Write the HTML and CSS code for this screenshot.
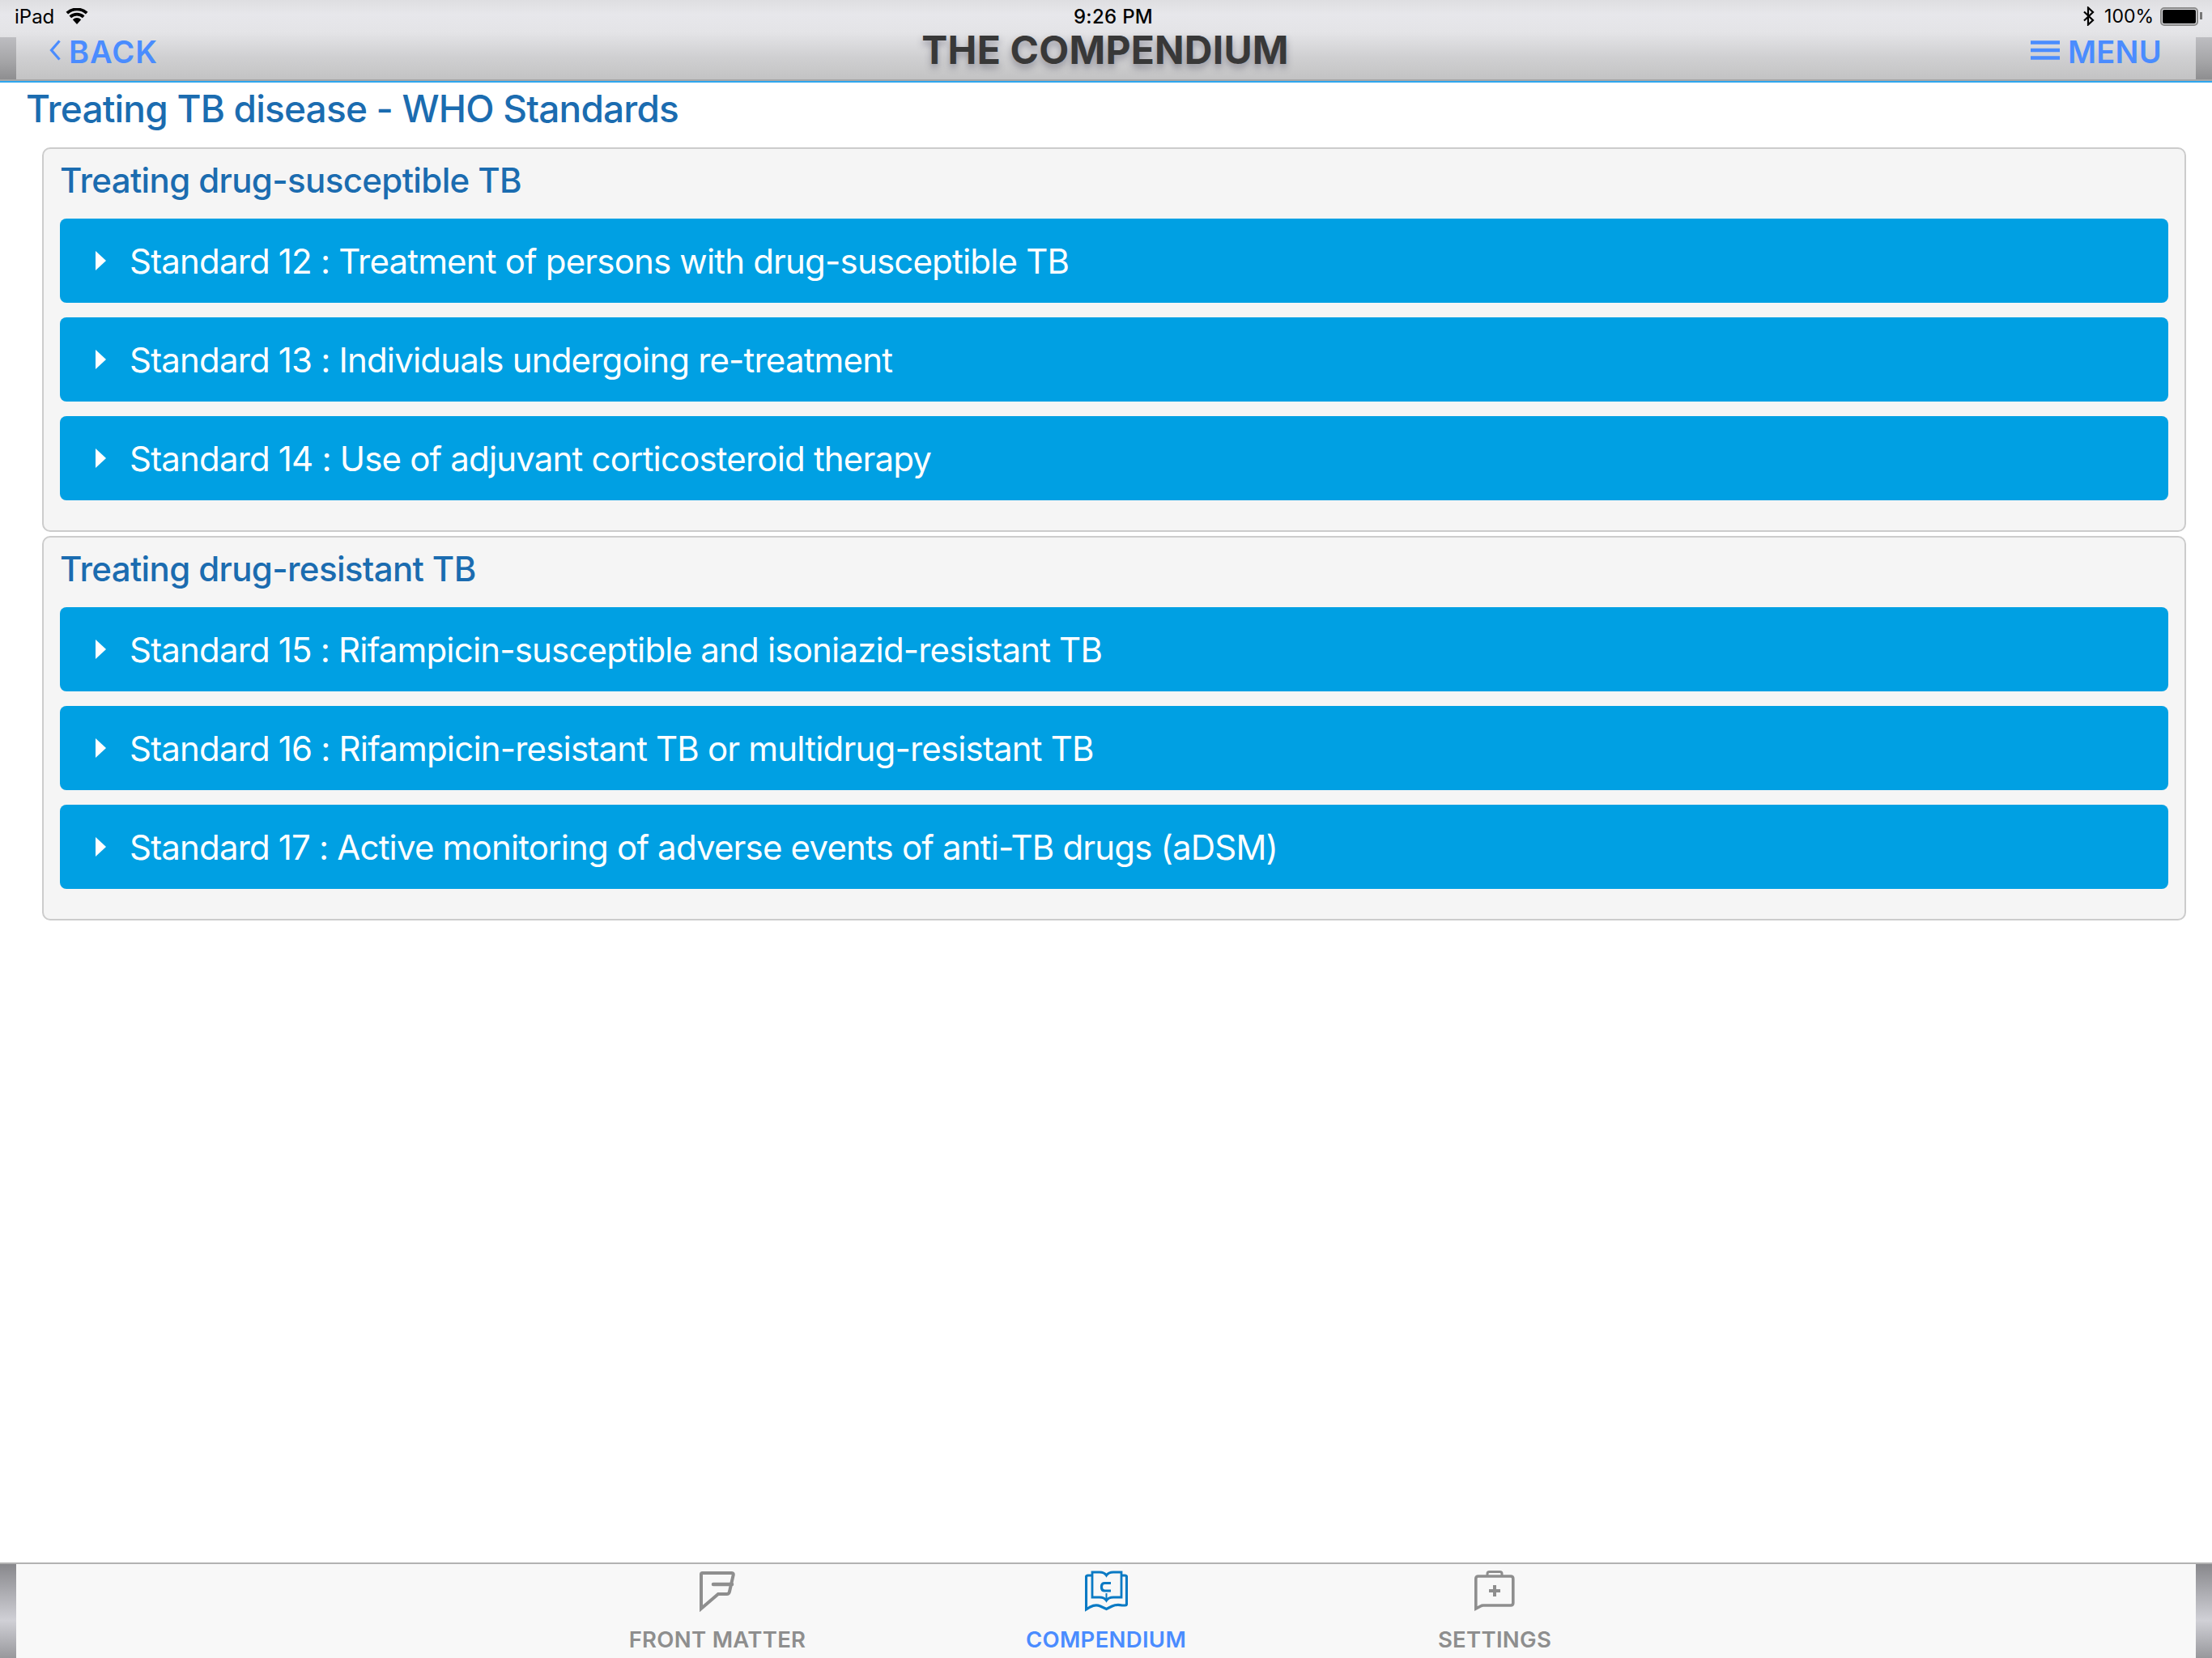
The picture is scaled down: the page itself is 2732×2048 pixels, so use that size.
FILE: index.html
```html
<!DOCTYPE html>
<html lang="en">
<head>
  <meta charset="UTF-8" />
  <title>The Compendium</title>
  <link rel="stylesheet" href="styles.css">
</head>
<body>
  <header class="topbar">
    <div class="status">
      <div class="status-left">
        <span>iPad</span>
        <svg class="wifi" width="28" height="20" viewBox="0 0 28 20"><path d="M14 20 8.800 14.200a7.400 7.400 0 0 1 10.400 0z" fill="#000"/><path d="M5.800 10.800a12 12 0 0 1 16.400 0M1.800 6.200a18 18 0 0 1 24.400 0" fill="none" stroke="#000" stroke-width="3.800"/></svg>
      </div>
      <div class="status-time">9:26 PM</div>
      <div class="status-right">
        <svg class="bt" width="16" height="24" viewBox="0 0 16 24"><path d="M2 6.500 13 17l-6 5.500V1.500L13 7 2 17.500" fill="none" stroke="#000" stroke-width="2.200"/></svg>
        <span>100%</span>
        <div class="battery"><div class="battery-fill"></div></div>
      </div>
    </div>
    <nav class="navrow">
      <a class="nav-link nav-back">
        <svg width="16" height="26" viewBox="0 0 16 26"><path d="M13.500 1.500 3.500 13l10 11.500" fill="none" stroke="#4a8cff" stroke-width="3.200"/></svg>
        BACK
      </a>
      <div class="app-title">THE COMPENDIUM</div>
      <a class="nav-link nav-menu">
        <svg width="36" height="24" viewBox="0 0 36 24"><path d="M0 2.500h36M0 12h36M0 21.500h36" stroke="#4a8cff" stroke-width="4.600"/></svg>
        MENU
      </a>
    </nav>
  </header>

  <main class="content">
    <h1 class="page-title">Treating TB disease - WHO Standards</h1>

    <section class="panel">
      <h2 class="panel-title">Treating drug-susceptible TB</h2>
      <div class="row"><span class="caret"></span>Standard 12 : Treatment of persons with drug-susceptible TB</div>
      <div class="row"><span class="caret"></span>Standard 13 : Individuals undergoing re-treatment</div>
      <div class="row"><span class="caret"></span>Standard 14 : Use of adjuvant corticosteroid therapy</div>
    </section>

    <section class="panel">
      <h2 class="panel-title">Treating drug-resistant TB</h2>
      <div class="row"><span class="caret"></span>Standard 15 : Rifampicin-susceptible and isoniazid-resistant TB</div>
      <div class="row"><span class="caret"></span>Standard 16 : Rifampicin-resistant TB or multidrug-resistant TB</div>
      <div class="row"><span class="caret"></span>Standard 17 : Active monitoring of adverse events of anti-TB drugs (aDSM)</div>
    </section>
  </main>

  <footer class="tabbar">
    <div class="tab-list">
      <div class="tab">
        <svg width="46" height="51" viewBox="0 0 46 51"><path d="M3 47V4.500Q3 3 4.500 3H41q2 0 1.700 2.500L38 26q-.5 3-3.500 3H24z" fill="none" stroke="#8e8e8e" stroke-width="4"/><path d="M18 17h23" stroke="#8e8e8e" stroke-width="4.500" stroke-linecap="round"/></svg>
        <span>FRONT MATTER</span>
      </div>
      <div class="tab tab-active">
        <svg width="53" height="51" viewBox="0 0 53 51"><path d="M8 6H3.500Q1.500 6 1.500 8V48L6.500 45Q13 41.500 19 44L26.500 47.500 33.500 44Q39 41.500 46 43H49.500Q51.500 43 51.500 41V8Q51.500 6 49.500 6H45" fill="none" stroke="#0a7ac4" stroke-width="3.200"/><path d="M9 2H18Q24 2 26.500 6 29 2 35 2H45V33H35Q29 33 26.500 37 24 33 18 33H9Z" fill="none" stroke="#0a7ac4" stroke-width="2.800"/><path d="M32 15.500H24.500Q20.500 15.500 20.500 19.500V21Q20.500 25 24.500 25H32" fill="none" stroke="#0a7ac4" stroke-width="3.200"/><path d="M26.500 28V36" stroke="#0a7ac4" stroke-width="2"/></svg>
        <span>COMPENDIUM</span>
      </div>
      <div class="tab">
        <svg width="50" height="51" viewBox="0 0 50 51"><path d="M1.800 47V10q0-3 3-3h40q3 0 3 3v30q0 3-3 3H11q-2 0-3 .8z" fill="none" stroke="#8e8e8e" stroke-width="3.600"/><path d="M16 7V4q0-2.500 2.500-2.500h13Q34 1.500 34 4v3" fill="none" stroke="#8e8e8e" stroke-width="3"/><path d="M25 18v14M18 25h14" stroke="#8e8e8e" stroke-width="4"/></svg>
        <span>SETTINGS</span>
      </div>
    </div>
  </footer>
</body>
</html>
```

FILE: styles.css
```css
* {
  box-sizing: border-box;
}
html, body {
  height: 100%;
}
body {
  margin: 0;
  display: flex;
  flex-direction: column;
  background: #fff;
  font-family: Inter, "Noto Sans", "Liberation Sans", sans-serif;
}

/* top bar */
.topbar {
  position: relative;
  height: 102px;
  flex: none;
  border-bottom: 2px solid #2ea6ee;
  background: linear-gradient(to bottom, #dedee1 0, #e7e7eb 18px, #e4e4e7 40px, #d0d0d2 70px, #c3c3c4 98px, #a6a6a6 98px);
}
.topbar::before,
.topbar::after {
  content: "";
  position: absolute;
  top: 46px;
  bottom: 2px;
  width: 20px;
  background: linear-gradient(to bottom, #bdbdc1, #a4a4a6 60%, #8e8e90);
}
.topbar::before {
  left: 0;
}
.topbar::after {
  right: 0;
}
.status {
  display: grid;
  grid-template-columns: 1fr auto 1fr;
  height: 40px;
  padding: 0 17px 0 18px;
  align-items: center;
  font-size: 24px;
  color: #000;
}
.status-left {
  display: flex;
  align-items: center;
  gap: 14px;
}
.status-time {
  margin-left: 17px;
  font-weight: 500;
  letter-spacing: 0.3px;
}
.status-right {
  display: flex;
  justify-content: flex-end;
  align-items: center;
  gap: 8px;
  font-size: 23px;
}
.bt {
  margin-right: 3px;
}
.battery {
  position: relative;
  width: 47px;
  height: 23px;
  padding: 1px;
  border: 2px solid #8a8a8a;
  border-radius: 5px;
}
.battery::after {
  content: "";
  position: absolute;
  right: -7px;
  top: 4px;
  width: 3px;
  height: 9px;
  background: #777;
}
.battery-fill {
  height: 100%;
  background: #000;
  border-radius: 2px;
}
.navrow {
  display: grid;
  grid-template-columns: 1fr auto 1fr;
  height: 42px;
  padding: 0 62px 0 60px;
  align-items: center;
  align-content: center;
}
.nav-link {
  display: flex;
  align-items: center;
  gap: 8px;
  margin-top: 6px;
  font-size: 38px;
  font-weight: 600;
  color: #4a8cff;
  letter-spacing: 0.3px;
}
.nav-link svg {
  margin-bottom: 5px;
}
.nav-back {
  gap: 9px;
  letter-spacing: 1px;
}
.nav-menu {
  justify-content: flex-end;
  gap: 10px;
}
.app-title {
  font-size: 48px;
  font-weight: 700;
  color: #383838;
  letter-spacing: 0.2px;
  text-shadow: 0 5px 8px rgba(70, 70, 90, 0.45);
}

/* content */
.content {
  flex: 1;
  padding: 0 32px 0 32px;
}
.page-title {
  margin: 0 0 16px 0;
  height: 64px;
  line-height: 64px;
  font-size: 46px;
  font-weight: 500;
  letter-spacing: -0.8px;
  color: #1b6cb0;
}
.panel {
  margin: 0 0 5px 20px;
  height: 475px;
  padding: 0 20px;
  background: #f5f5f5;
  border: 2px solid #ccc;
  border-radius: 10px;
}
.panel-title {
  margin: 0 0 8px 0;
  height: 78px;
  line-height: 78px;
  font-size: 42px;
  font-weight: 500;
  letter-spacing: -0.62px;
  color: #1b6cb0;
}
.row {
  display: flex;
  align-items: center;
  height: 104px;
  margin-bottom: 18px;
  padding-left: 44px;
  background: #00a0e3;
  border-radius: 8px;
  font-size: 42px;
  letter-spacing: -0.82px;
  color: #fff;
}
.caret {
  width: 0;
  height: 0;
  margin-right: 29px;
  border-left: 13px solid #fff;
  border-top: 12.500px solid transparent;
  border-bottom: 12.500px solid transparent;
}

/* tab bar */
.tabbar {
  flex: none;
  height: 118px;
  padding: 0 20px;
  border-top: 2px solid #b2b2b2;
  background: linear-gradient(#f8f8f8, #f8f8f8),
    linear-gradient(to bottom, #88888c 0, #d0d0d6 60%, #98989c 100%);
  background-clip: content-box, padding-box;
}
.tab-list {
  display: flex;
  justify-content: center;
  height: 100%;
}
.tab {
  display: flex;
  flex-direction: column;
  align-items: center;
  width: 480px;
  padding-top: 8px;
  font-size: 27.500px;
  font-weight: 600;
  color: #8e8e8e;
}
.tab span {
  margin-top: 17px;
  letter-spacing: 0.3px;
}
.tab-active {
  color: #4a8cff;
}
```
